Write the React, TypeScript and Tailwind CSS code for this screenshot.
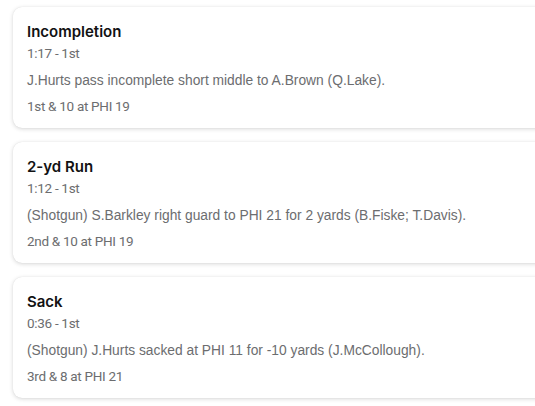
import React from "react";

const plays = [
  {
    title: "Incompletion",
    time: "1:17 - 1st",
    desc: "J.Hurts pass incomplete short middle to A.Brown (Q.Lake).",
    down: "1st & 10 at PHI 19",
  },
  {
    title: "2-yd Run",
    time: "1:12 - 1st",
    desc: "(Shotgun) S.Barkley right guard to PHI 21 for 2 yards (B.Fiske; T.Davis).",
    down: "2nd & 10 at PHI 19",
  },
  {
    title: "Sack",
    time: "0:36 - 1st",
    desc: "(Shotgun) J.Hurts sacked at PHI 11 for -10 yards (J.McCollough).",
    down: "3rd & 8 at PHI 21",
  },
];

export default function App() {
  return (
    <div className="w-[535px] h-[406px] overflow-hidden bg-white">
      <div className="flex flex-col gap-[14px] pl-[13px] pt-[7px] w-[600px]">
        {plays.map((p) => (
          <div
            key={p.title}
            className="h-[121px] rounded-[9px] bg-white px-[14px] pt-[15px] shadow-[0_1px_4px_rgba(0,0,0,0.16),0_0_1px_rgba(0,0,0,0.1)]"
          >
            <div className="text-[15px] leading-[19px] font-semibold text-[#121213] font-['Inter',sans-serif]">
              {p.title}
            </div>
            <div className="mt-[3px] text-[13.5px] leading-[18px] tracking-[-0.3px] text-[#6c6d6f] font-['Roboto',sans-serif]">
              {p.time}
            </div>
            <div className="mt-[10px] text-[13.8px] leading-[18px] text-[#6c6d6f] font-['Liberation_Sans',sans-serif]">
              {p.desc}
            </div>
            <div className="mt-[7px] text-[13.5px] leading-[18px] tracking-[-0.3px] text-[#6c6d6f] font-['Roboto',sans-serif]">
              {p.down}
            </div>
          </div>
        ))}
      </div>
    </div>
  );
}
